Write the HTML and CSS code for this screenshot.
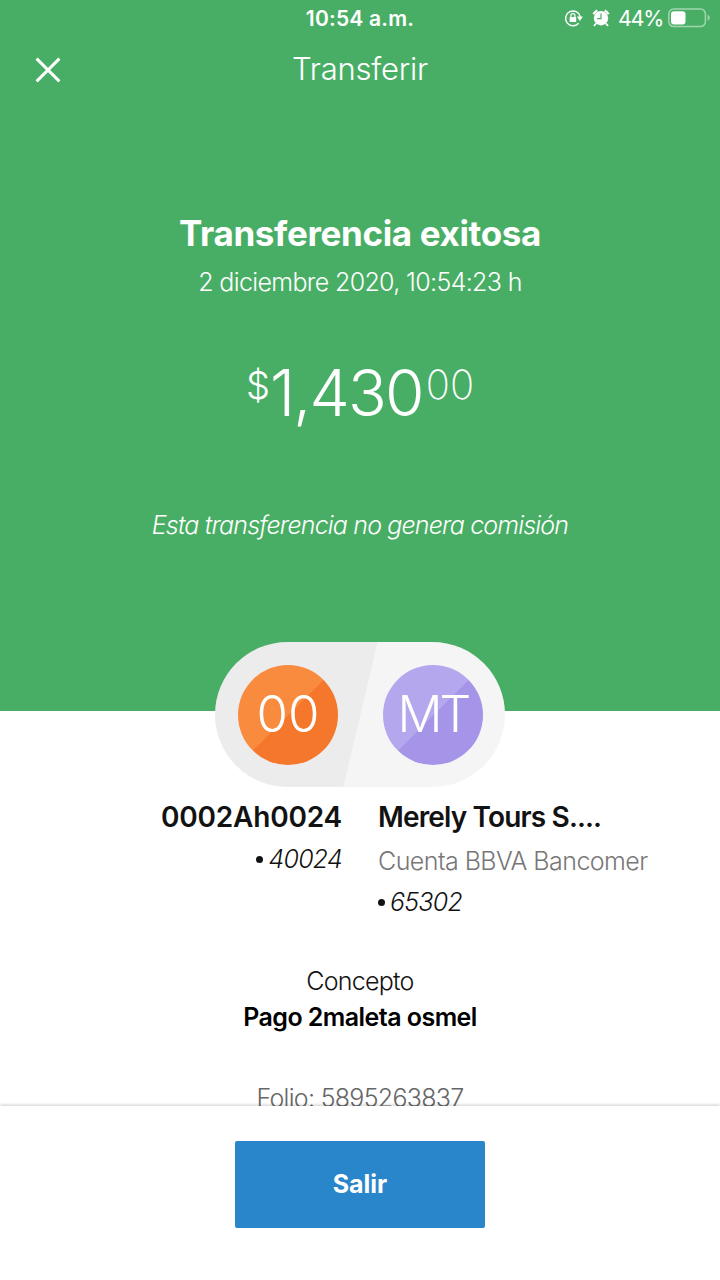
FILE: index.html
```html
<!DOCTYPE html>
<html lang="es">
    <head>
        <title>Transferir</title>
        <meta charset="UTF-8"/>
        <meta name="viewport" content="width=device-width, initial-scale=1.0"/>
        <link rel="stylesheet" href="styles.css">
    </head>
    <body>
        <div class="pantalla">
            <header class="cabecera">
                <div class="estado">
                    <span class="hora">10:54 a.m.</span>
                    <div class="estado-iconos">
                        <svg class="icono-bloqueo" width="20" height="18" viewBox="0 0 20 18">
                            <path d="M14.6 14.2A7.4 7.4 0 1 1 16.2 7.6" fill="none" stroke="#fff" stroke-width="1.5"/>
                            <path d="M12.9 7.6h6l-3 4.4z" fill="#fff"/>
                            <rect x="5.6" y="8" width="6.6" height="5" rx=".8" fill="#fff"/>
                            <path d="M6.9 8.5V6.6a2 2 0 0 1 4 0v1.9" fill="none" stroke="#fff" stroke-width="1.2"/>
                        </svg>
                        <svg class="icono-alarma" width="18" height="18" viewBox="0 0 18 18">
                            <circle cx="9" cy="9.2" r="7.2" fill="#fff"/>
                            <path d="M1.4 5.2A9 9 0 0 1 5.3 1.5M12.7 1.5A9 9 0 0 1 16.6 5.2" fill="none" stroke="#fff" stroke-width="2.2"/>
                            <path d="M4 14.5L2 17M14 14.5l2 2.5" stroke="#fff" stroke-width="1.8"/>
                            <path d="M9 4.5v5.2H5.2" fill="none" stroke="#49ae65" stroke-width="1.2"/>
                        </svg>
                        <span class="porcentaje">44%</span>
                        <svg class="icono-bateria" width="43" height="20" viewBox="0 0 43 20">
                            <rect x=".8" y="1" width="36.6" height="17.6" rx="5" fill="none" stroke="#a0d6ad" stroke-width="1.5"/>
                            <rect x="3" y="3.2" width="14.5" height="13.2" rx="3" fill="#fff"/>
                            <path d="M39.6 6.8q2.2 1 2.2 3t-2.2 3z" fill="#a0d6ad"/>
                        </svg>
                    </div>
                </div>
                <div class="barra">
                    <svg class="cerrar" width="26" height="26" viewBox="0 0 26 26">
                        <path d="M1.6 1.6L24.4 24.4M24.4 1.6L1.6 24.4" stroke="#fff" stroke-width="2.9"/>
                    </svg>
                    <span class="titulo">Transferir</span>
                </div>
                <h1 class="exito">Transferencia exitosa</h1>
                <p class="fecha">2 diciembre 2020, 10:54:23 h</p>
                <div class="importe">
                    <span class="simbolo">$</span><span class="entero">1,430</span><span class="centavos">00</span>
                </div>
                <p class="comision">Esta transferencia no genera comisión</p>
            </header>

            <main class="detalle">
                <div class="avatares">
                    <div class="avatar naranja"><span>00</span></div>
                    <div class="avatar morado"><span>MT</span></div>
                </div>
                <div class="cuentas">
                    <div class="cuenta origen">
                        <div class="nombre">0002Ah0024</div>
                        <div class="numero"><i class="punto"></i><span>40024</span></div>
                    </div>
                    <div class="cuenta destino">
                        <div class="nombre">Merely Tours S....</div>
                        <div class="banco">Cuenta BBVA Bancomer</div>
                        <div class="numero"><i class="punto"></i><span>65302</span></div>
                    </div>
                </div>
                <div class="concepto">Concepto</div>
                <div class="concepto-texto">Pago 2maleta osmel</div>
                <div class="folio">Folio: 5895263837</div>
            </main>

            <footer class="pie">
                <button type="button" class="salir">Salir</button>
            </footer>
        </div>
    </body>
</html>
```
FILE: styles.css
```css
* {
    box-sizing: border-box;
}

body {
    margin: 0;
    background-color: #fff;
    font-family: Inter, "Liberation Sans", sans-serif;
    color: #121212;
}

h1, p {
    margin: 0;
}

.pantalla {
    width: 720px;
    height: 1280px;
    display: flex;
    flex-direction: column;
    overflow: hidden;
}

/* cabecera verde */
.cabecera {
    height: 711px;
    flex: none;
    background-color: #49ae65;
    color: #fff;
    text-align: center;
    white-space: nowrap;
}

.estado {
    height: 37px;
    display: grid;
    grid-template-columns: 1fr auto 1fr;
    align-items: center;
}

.hora {
    grid-column: 2;
    font-size: 21px;
    font-weight: 600;
    letter-spacing: 0.2px;
}

.estado-iconos {
    display: flex;
    align-items: center;
    justify-content: flex-end;
    padding: 0 9px 1px 0;
}

.icono-alarma {
    margin-left: 8px;
}

.porcentaje {
    margin-left: 8px;
    font-size: 21.5px;
    line-height: 26px;
    letter-spacing: -1.3px;
}

.icono-bateria {
    margin-left: 5px;
}

.barra {
    height: 64px;
    display: grid;
    grid-template-columns: 1fr auto 1fr;
    align-items: center;
}

.cerrar {
    margin: 2px 0 0 35px;
}

.titulo {
    padding-bottom: 2px;
    font-size: 31px;
    font-weight: 300;
    letter-spacing: -0.2px;
}

.exito {
    margin-top: 112px;
    font-size: 35px;
    line-height: 40px;
    font-weight: 700;
    letter-spacing: -0.35px;
}

.fecha {
    margin-top: 14px;
    font-size: 25px;
    line-height: 30px;
    font-weight: 300;
    letter-spacing: -0.65px;
}

.importe {
    margin-top: 56px;
    height: 80px;
    display: flex;
    justify-content: center;
    font-weight: 300;
}

.entero {
    margin-right: 3px;
    font-size: 64px;
    line-height: 80px;
    letter-spacing: -1.8px;
}

.simbolo {
    font-size: 38px;
    line-height: 64px;
}

.centavos {
    font-size: 40px;
    line-height: 64px;
    font-weight: 250;
}

.comision {
    margin-top: 77px;
    font-size: 25px;
    line-height: 30px;
    font-weight: 300;
    font-style: italic;
    letter-spacing: -0.85px;
}

/* detalle */
.detalle {
    height: 394px;
    flex: none;
    text-align: center;
    white-space: nowrap;
}

.avatares {
    position: relative;
    width: 290px;
    height: 145px;
    margin: -69px auto 0;
    padding: 0 22px 0 23px;
    display: flex;
    justify-content: space-between;
    align-items: center;
    border-radius: 73px;
    background: linear-gradient(103.3deg, #ececec 50%, #f5f5f5 50.3%);
}

.avatar {
    width: 100px;
    height: 100px;
    display: flex;
    justify-content: center;
    align-items: center;
    border-radius: 50%;
    color: #fff;
    font-size: 51px;
    line-height: 60px;
    font-weight: 300;
    padding-bottom: 2px;
}

.naranja {
    background: linear-gradient(135deg, #f98b3e 50%, #f5772c 50.5%);
}

.morado {
    background: linear-gradient(135deg, #b5a7ee 50%, #a594e8 50.5%);
    font-size: 50px;
    letter-spacing: -3px;
}

.cuentas {
    margin-top: 13px;
    height: 150px;
    display: grid;
    grid-template-columns: 342px 342px;
    column-gap: 36px;
}

.origen {
    text-align: right;
}

.destino {
    text-align: left;
}

.nombre {
    font-size: 28px;
    line-height: 34px;
    font-weight: 600;
    letter-spacing: -0.2px;
}

.destino .nombre {
    letter-spacing: -0.85px;
}

.banco {
    margin-top: 12px;
    font-size: 25px;
    line-height: 30px;
    font-weight: 300;
    letter-spacing: -0.55px;
    color: #777;
}

.numero {
    margin-top: 10px;
    display: flex;
    align-items: center;
    gap: 5px;
    font-size: 25px;
    line-height: 32px;
    font-style: italic;
    font-weight: 300;
    letter-spacing: -0.75px;
}

.origen .numero {
    margin-top: 9px;
    justify-content: flex-end;
}

.punto {
    width: 7px;
    height: 7px;
    border-radius: 50%;
    background-color: #121212;
}

.concepto {
    margin-top: 16px;
    font-size: 25px;
    line-height: 30px;
    font-weight: 300;
    letter-spacing: -0.75px;
}

.concepto-texto {
    margin-top: 5px;
    font-size: 25px;
    line-height: 32px;
    font-weight: 600;
    letter-spacing: -0.55px;
    color: #000;
}

.folio {
    margin-top: 50px;
    font-size: 25px;
    line-height: 30px;
    font-weight: 300;
    letter-spacing: -0.7px;
    color: #666;
}

/* pie */
.pie {
    position: relative;
    flex: 1;
    padding-top: 35px;
    margin-top: 1px;
    text-align: center;
    background-color: #fff;
    box-shadow: 0 -1px 3px rgba(0, 0, 0, 0.2);
}

.salir {
    width: 250px;
    height: 87px;
    padding: 0 0 1px;
    border: none;
    border-radius: 2px;
    background-color: #2a86ca;
    color: #fff;
    font-family: inherit;
    font-size: 25px;
    font-weight: 700;
}
```
